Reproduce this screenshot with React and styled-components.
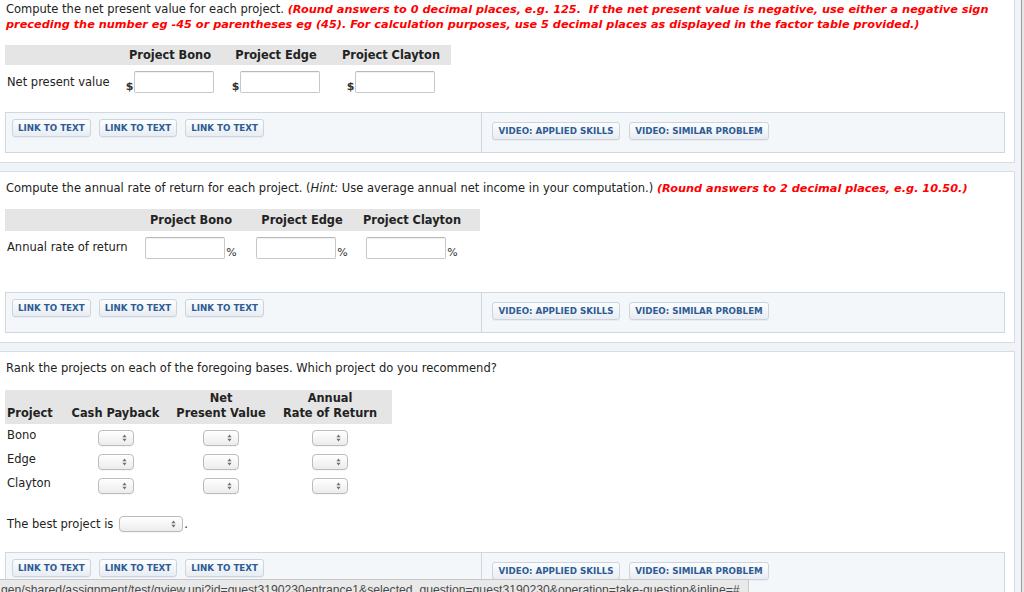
import React from "react";
import styled, { createGlobalStyle } from "styled-components";

const Global = createGlobalStyle`
  html, body { margin: 0; padding: 0; }
  body {
    background: #e6e6e6;
    font-family: "DejaVu Sans", Verdana, sans-serif;
    font-size: 11.5px;
    color: #222;
    overflow: hidden;
    width: 1024px;
    height: 592px;
  }
`;

const Page = styled.div`
  width: 1022px;
  height: 592px;
  box-sizing: border-box;
  border-right: 1px solid #9c9c9c;
  background: #f0f3f7;
  overflow: hidden;
`;

const Panel = styled.section`
  box-sizing: border-box;
  width: 1016px;
  margin: ${(p) => p.$mt}px 0 0 -1px;
  padding: ${(p) => p.$pt}px 9px 9px 5px;
  background: #fff;
  border: 1px solid #d6dde6;
`;

const Prompt = styled.div`
  line-height: ${(p) => p.$lh || 15}px;
  height: ${(p) => (p.$lh || 15) * (p.$lines || 1)}px;
  padding-left: 1px;
  white-space: nowrap;
`;

const Red = styled.span`
  color: #ff0000;
  font-weight: bold;
  font-style: italic;
  font-size: 11.3px;
`;

const Grid = styled.div`
  display: grid;
  grid-template-columns: ${(p) => p.$cols};
  width: ${(p) => p.$w}px;
`;

const HeadRow = styled(Grid)`
  background: #e5e5e5;
  height: ${(p) => p.$h}px;
  margin-top: ${(p) => p.$mt}px;
  align-items: ${(p) => (p.$end ? "end" : "center")};
  font-weight: bold;
  font-size: 11.4px;
  line-height: 15px;
  box-sizing: border-box;
  padding-bottom: ${(p) => (p.$end ? 3 : 0)}px;
`;

const HeadCell = styled.div`
  text-align: ${(p) => (p.$left ? "left" : "center")};
  padding-left: ${(p) => (p.$left ? 2 : 0)}px;
  white-space: nowrap;
`;

const BodyRow = styled(Grid)`
  height: ${(p) => p.$h}px;
  padding-top: ${(p) => p.$pt || 0}px;
  align-items: ${(p) => p.$align || "center"};
  box-sizing: border-box;
`;

const Label = styled.div`
  padding-left: 2px;
  padding-top: ${(p) => p.$pt || 0}px;
  line-height: 15px;
  white-space: nowrap;
`;

const FieldCell = styled.div`
  display: flex;
  justify-content: center;
  align-items: flex-end;
  gap: ${(p) => p.$gap || 0}px;
  padding-top: ${(p) => p.$pt || 0}px;
`;

const Unit = styled.span`
  font-size: 11px;
  line-height: 11px;
  font-weight: ${(p) => (p.$bold ? "bold" : "normal")};
  margin-bottom: 1px;
  color: #333;
`;

const TextInput = styled.input`
  box-sizing: border-box;
  width: 80px;
  height: 22px;
  margin: 0;
  border: 1px solid #c8c8c8;
  border-top-color: #b8b8b8;
  border-radius: 2px;
  background: #fff;
  box-shadow: inset 0 1px 1px rgba(0, 0, 0, 0.06);
  font: inherit;
  padding: 0 3px;
`;

const SelectBox = styled.div`
  box-sizing: border-box;
  width: ${(p) => p.$w}px;
  height: 16px;
  border: 1px solid #bcbcbc;
  border-radius: 4px;
  background: linear-gradient(#ffffff, #ececec);
  box-shadow: 0 1px 0 rgba(0, 0, 0, 0.04);
  display: flex;
  align-items: center;
  justify-content: flex-end;
  padding-right: 6px;
  margin-top: ${(p) => p.$mt || 0}px;
  justify-self: center;
`;

const Arrows = () => (
  <svg width="5" height="8" viewBox="0 0 5 8">
    <path d="M2.5 0.5 L4.6 3.2 L0.4 3.2 Z" fill="#6f6f6f" />
    <path d="M2.5 7.5 L4.6 4.8 L0.4 4.8 Z" fill="#6f6f6f" />
  </svg>
);

const Select = ({ w = 36, mt }) => (
  <SelectBox $w={w} $mt={mt}>
    <Arrows />
  </SelectBox>
);

const BestLine = styled.div`
  display: flex;
  align-items: center;
  height: 16px;
  margin-top: 20px;
  padding-left: 2px;
  gap: 6px;
`;

const Period = styled.span`
  margin-left: -5px;
`;

const LinkBar = styled.div`
  display: flex;
  box-sizing: border-box;
  height: 41px;
  margin-top: ${(p) => p.$mt}px;
  border: 1px solid #cfd8e2;
  background: #f4f7fa;
`;

const LinkGroup = styled.div`
  display: flex;
  align-items: flex-start;
  gap: ${(p) => p.$gap}px;
  box-sizing: border-box;
  width: ${(p) => (p.$w ? p.$w + "px" : "auto")};
  padding: ${(p) => p.$pt}px 0 0 ${(p) => p.$pl}px;
  border-right: ${(p) => (p.$divider ? "1px solid #cfd8e2" : "none")};
`;

const Btn = styled.button`
  box-sizing: border-box;
  height: 18px;
  margin: 0;
  padding: 0 5px;
  min-width: ${(p) => p.$w}px;
  border: 1px solid #cbd4df;
  border-radius: 3px;
  background: linear-gradient(#fcfdfe, #e8edf3);
  box-shadow: 0 1px 0 rgba(0, 0, 0, 0.04);
  color: #2d5b95;
  font-family: "DejaVu Sans", Verdana, sans-serif;
  font-weight: bold;
  font-size: 8.7px;
  line-height: 16px;
  white-space: nowrap;
`;

const LinkBarRow = ({ mt }) => (
  <LinkBar $mt={mt}>
    <LinkGroup $w={476} $gap={8} $pt={6} $pl={6} $divider>
      <Btn $w={78}>LINK TO TEXT</Btn>
      <Btn $w={78}>LINK TO TEXT</Btn>
      <Btn $w={78}>LINK TO TEXT</Btn>
    </LinkGroup>
    <LinkGroup $gap={9} $pt={9} $pl={10}>
      <Btn $w={128}>VIDEO: APPLIED SKILLS</Btn>
      <Btn $w={140}>VIDEO: SIMILAR PROBLEM</Btn>
    </LinkGroup>
  </LinkBar>
);

const StatusBar = styled.div`
  position: fixed;
  left: 0;
  top: 579px;
  height: 22px;
  width: 749px;
  box-sizing: border-box;
  background: #e9e9e9;
  border-top: 1px solid #c8c8c8;
  border-right: 1px solid #c8c8c8;
  color: #4a4a4a;
  font-family: "Liberation Sans", Arial, sans-serif;
  font-size: 12.2px;
  line-height: 20px;
  padding-left: 1px;
  white-space: nowrap;
  overflow: hidden;
`;

const T1 = "114px 102px 110px 120px";
const T2 = "131px 110px 112px 108px 14px";
const T3 = "60px 101px 110px 108px 8px";

export default function App() {
  return (
    <>
      <Global />
      <Page>
        <Panel $mt={-1} $pt={2}>
          <Prompt $lh={14} $lines={2}>
            Compute the net present value for each project.{" "}
            <Red>
              (Round answers to 0 decimal places, e.g. 125.{"\u00a0"} If the net present value is negative, use either a negative sign
              <br />
              preceding the number eg -45 or parentheses eg (45). For calculation purposes, use 5 decimal places as displayed in the factor table provided.)
            </Red>
          </Prompt>
          <HeadRow $cols={T1} $w={446} $h={20} $mt={15}>
            <HeadCell />
            <HeadCell>Project Bono</HeadCell>
            <HeadCell>Project Edge</HeadCell>
            <HeadCell>Project Clayton</HeadCell>
          </HeadRow>
          <BodyRow $cols={T1} $w={446} $h={28} $pt={6} $align="center">
            <Label>Net present value</Label>
            <FieldCell $gap={1}>
              <Unit $bold>$</Unit>
              <TextInput />
            </FieldCell>
            <FieldCell $gap={1}>
              <Unit $bold>$</Unit>
              <TextInput />
            </FieldCell>
            <FieldCell $gap={1}>
              <Unit $bold>$</Unit>
              <TextInput />
            </FieldCell>
          </BodyRow>
          <LinkBarRow mt={19} />
        </Panel>

        <Panel $mt={8} $pt={9}>
          <Prompt>
            Compute the annual rate of return for each project. (<i>Hint:</i> Use average annual net income in your computation.){" "}
            <Red>(Round answers to 2 decimal places, e.g. 10.50.)</Red>
          </Prompt>
          <HeadRow $cols={T2} $w={475} $h={22} $mt={13}>
            <HeadCell />
            <HeadCell>Project Bono</HeadCell>
            <HeadCell>Project Edge</HeadCell>
            <HeadCell>Project Clayton</HeadCell>
          </HeadRow>
          <BodyRow $cols={T2} $w={475} $h={28} $pt={5}>
            <Label>Annual rate of return</Label>
            <FieldCell $gap={1}>
              <TextInput />
              <Unit>%</Unit>
            </FieldCell>
            <FieldCell $gap={1}>
              <TextInput />
              <Unit>%</Unit>
            </FieldCell>
            <FieldCell $gap={1}>
              <TextInput />
              <Unit>%</Unit>
            </FieldCell>
          </BodyRow>
          <LinkBarRow mt={33} />
        </Panel>

        <Panel $mt={8} $pt={9}>
          <Prompt>Rank the projects on each of the foregoing bases. Which project do you recommend?</Prompt>
          <HeadRow $cols={T3} $w={387} $h={34} $mt={14} $end>
            <HeadCell $left>Project</HeadCell>
            <HeadCell>Cash Payback</HeadCell>
            <HeadCell>
              Net
              <br />
              Present Value
            </HeadCell>
            <HeadCell>
              Annual
              <br />
              Rate of Return
            </HeadCell>
          </HeadRow>
          {["Bono", "Edge", "Clayton"].map((name) => (
            <BodyRow key={name} $cols={T3} $w={387} $h={24} $align="start">
              <Label $pt={4}>{name}</Label>
              <Select mt={6} />
              <Select mt={6} />
              <Select mt={6} />
            </BodyRow>
          ))}
          <BestLine>
            <span>The best project is</span>
            <Select w={64} />
            <Period>.</Period>
          </BestLine>
          <LinkBarRow mt={20} />
        </Panel>
      </Page>
      <StatusBar>
        gen/shared/assignment/test/qview.uni?id=quest3190230entrance1&selected_question=quest3190230&operation=take-question&inline=#
      </StatusBar>
    </>
  );
}
